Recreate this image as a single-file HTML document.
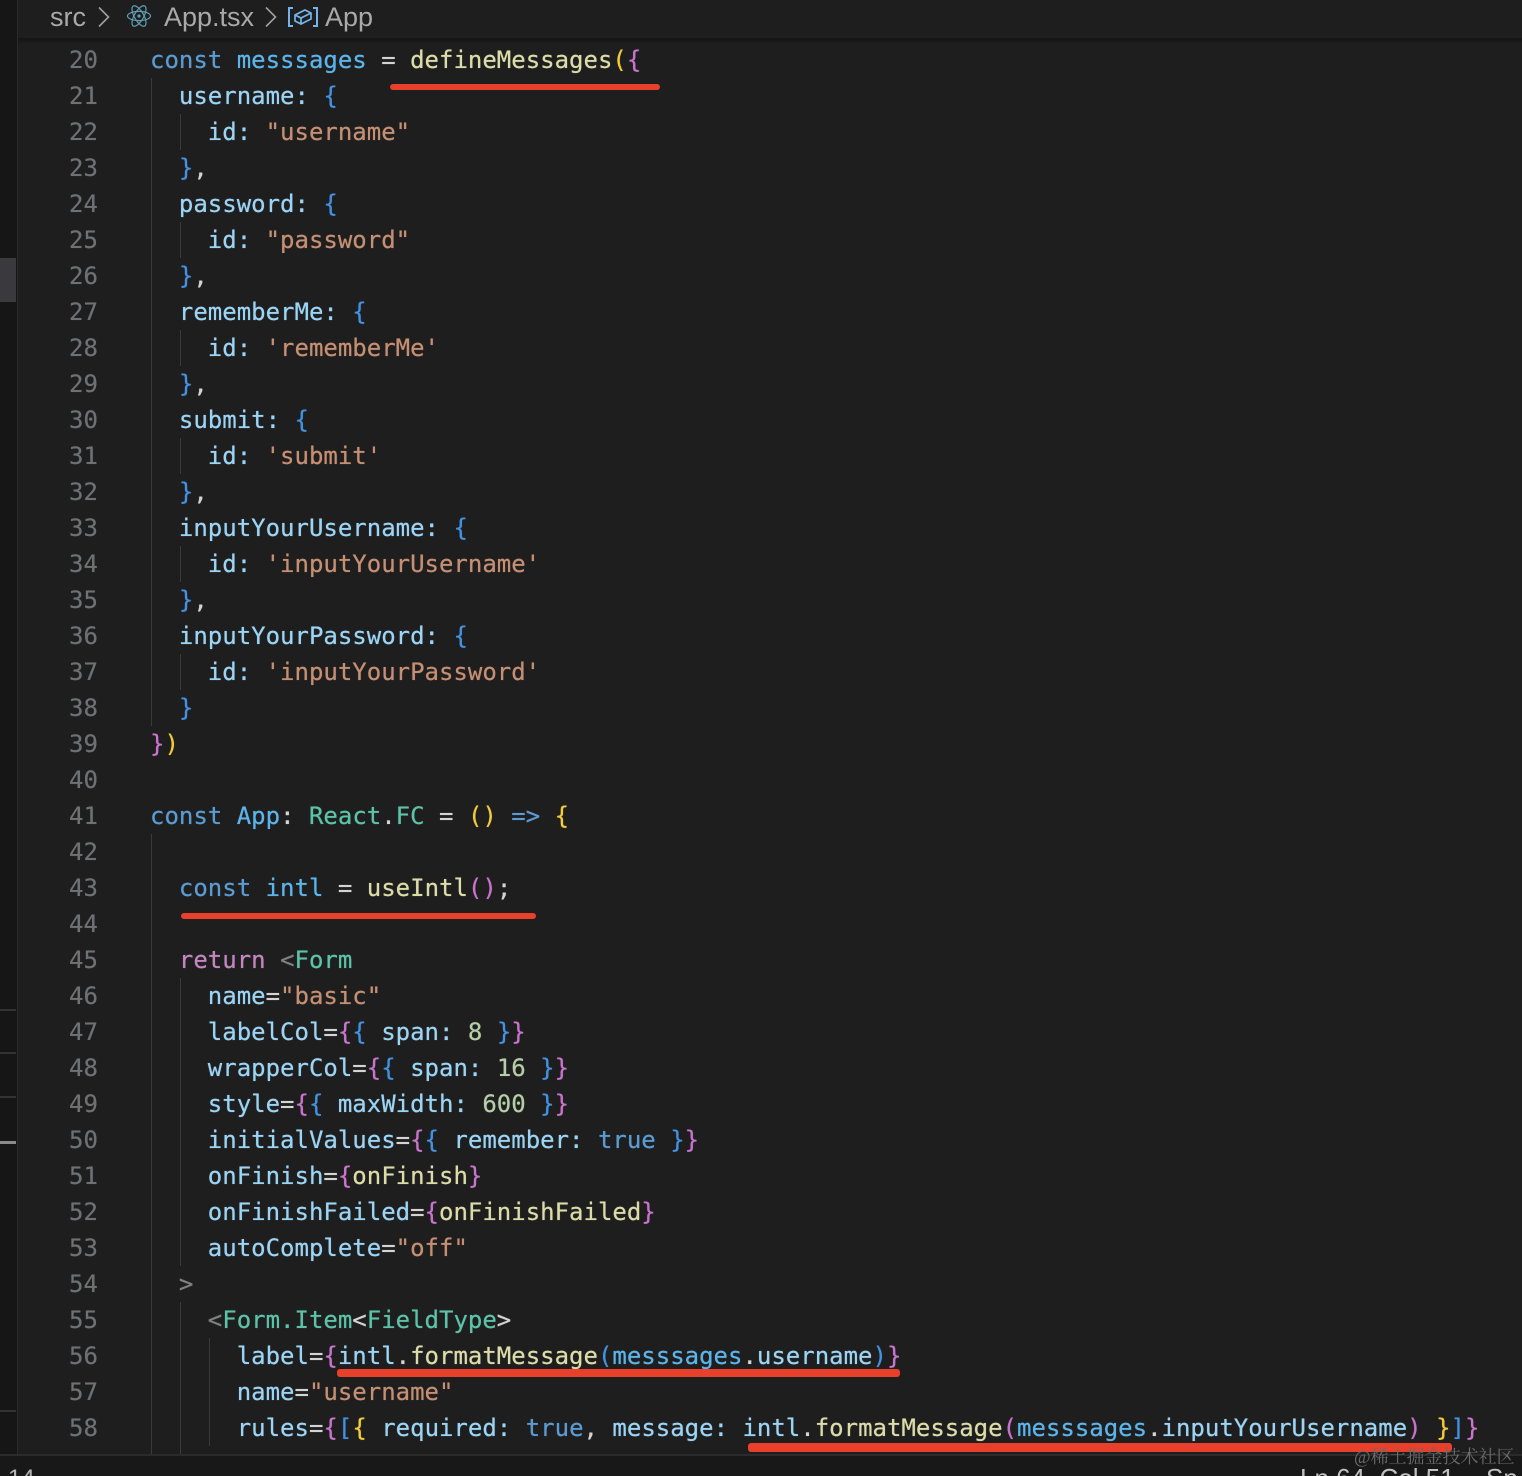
<!DOCTYPE html>
<html lang="en"><head><meta charset="utf-8"><title>App.tsx</title>
<style>
*{margin:0;padding:0;box-sizing:border-box}
html,body{width:1522px;height:1476px;overflow:hidden;background:#1e1e1e}
#p{position:relative;width:1522px;height:1476px;overflow:hidden;background:#1e1e1e;font-family:"DejaVu Sans Mono","Liberation Mono",monospace;font-size:24px;color:#9cd4f5;filter:blur(.3px)}
.a{position:absolute}
.l{position:absolute;left:150px;height:36px;line-height:36px;white-space:pre;text-shadow:0 0 .6px currentColor;top:0}
.n{position:absolute;left:69px;height:36px;line-height:36px;color:#6e7174;text-shadow:0 0 .5px currentColor}
.g{position:absolute;width:1px;background:#3a3a3a}
.r{position:absolute;background:#e8402a;border-radius:3px}
.u{font-family:"Liberation Sans",sans-serif;color:#a9a9a9;font-size:27px;line-height:34px;white-space:pre}
.k{color:#5a9bd2}.c{color:#5cb4ea}.f{color:#dcdcaa}.s{color:#c58f74}.t{color:#5cc3a8}.w{color:#d4d4d4}.y{color:#f2cb3c}.m{color:#c874cc}.b{color:#4391e0}.q{color:#c586c0}.d{color:#808080}.h{color:#b5cea8}
</style></head><body><div id="p">
<div class="a" style="left:0;top:0;width:17px;height:1476px;background:#161616"></div>
<div class="a" style="left:17px;top:0;width:1px;height:1455px;background:#2b2b2b"></div>
<div class="a" style="left:0;top:258px;width:16px;height:44px;background:#3a3a3e"></div>
<div class="a" style="left:0;top:1009px;width:16px;height:2px;background:#333"></div>
<div class="a" style="left:0;top:1052px;width:16px;height:2px;background:#333"></div>
<div class="a" style="left:0;top:1096px;width:16px;height:2px;background:#333"></div>
<div class="a" style="left:0;top:1141px;width:16px;height:3px;background:#8a8a8a"></div>
<div class="a" style="left:0;top:1410px;width:16px;height:2px;background:#333"></div>

<div class="a" style="left:18px;top:0;width:1504px;height:38px;background:#1e1e1e"></div>
<div class="a" style="left:18px;top:38px;width:1504px;height:6px;background:linear-gradient(#141414,#1e1e1e)"></div>
<div class="a u" style="left:50px;top:0">src</div>
<svg class="a" style="left:96px;top:6px" width="16" height="22" viewBox="0 0 16 22" fill="none" stroke="#a0a0a0" stroke-width="1.6"><path d="M3 1.5 12.5 11 3 20.5"/></svg>
<svg class="a" style="left:126px;top:2px" width="26" height="28" viewBox="-13 -14 26 28" fill="none" stroke="#5f9fb5" stroke-width="1.2"><ellipse rx="11.5" ry="4.6"/><ellipse rx="11.5" ry="4.6" transform="rotate(60)"/><ellipse rx="11.5" ry="4.6" transform="rotate(120)"/><circle r="1.6" fill="#5f9fb5" stroke="none"/></svg>
<div class="a u" style="left:164px;top:0">App.tsx</div>
<svg class="a" style="left:263px;top:6px" width="16" height="22" viewBox="0 0 16 22" fill="none" stroke="#a0a0a0" stroke-width="1.6"><path d="M3 1.5 12.5 11 3 20.5"/></svg>
<svg class="a" style="left:287px;top:6px" width="32" height="22" viewBox="0 0 32 22" fill="none" stroke="#74b4ea" stroke-width="2"><path d="M6 2H2V20H6M26 2H30V20H26"/><path d="M8 9 18 4 24 7V13L14 18 8 15ZM8 9 14 12 24 7M14 12V18" stroke-width="1.7"/></svg>
<div class="a u" style="left:325px;top:0">App</div>

<div class="g" style="left:151px;top:78px;height:648px"></div>
<div class="g" style="left:151px;top:834px;height:620px"></div>
<div class="g" style="left:180px;top:114px;height:36px"></div>
<div class="g" style="left:180px;top:222px;height:36px"></div>
<div class="g" style="left:180px;top:330px;height:36px"></div>
<div class="g" style="left:180px;top:438px;height:36px"></div>
<div class="g" style="left:180px;top:546px;height:36px"></div>
<div class="g" style="left:180px;top:654px;height:36px"></div>
<div class="g" style="left:180px;top:978px;height:288px"></div>
<div class="g" style="left:180px;top:1302px;height:152px"></div>
<div class="g" style="left:209px;top:1338px;height:108px"></div>

<div class="n" style="top:42px">20</div><div class="n" style="top:78px">21</div><div class="n" style="top:114px">22</div><div class="n" style="top:150px">23</div><div class="n" style="top:186px">24</div><div class="n" style="top:222px">25</div><div class="n" style="top:258px">26</div><div class="n" style="top:294px">27</div><div class="n" style="top:330px">28</div><div class="n" style="top:366px">29</div><div class="n" style="top:402px">30</div><div class="n" style="top:438px">31</div><div class="n" style="top:474px">32</div><div class="n" style="top:510px">33</div><div class="n" style="top:546px">34</div><div class="n" style="top:582px">35</div><div class="n" style="top:618px">36</div><div class="n" style="top:654px">37</div><div class="n" style="top:690px">38</div><div class="n" style="top:726px">39</div><div class="n" style="top:762px">40</div><div class="n" style="top:798px">41</div><div class="n" style="top:834px">42</div><div class="n" style="top:870px">43</div><div class="n" style="top:906px">44</div><div class="n" style="top:942px">45</div><div class="n" style="top:978px">46</div><div class="n" style="top:1014px">47</div><div class="n" style="top:1050px">48</div><div class="n" style="top:1086px">49</div><div class="n" style="top:1122px">50</div><div class="n" style="top:1158px">51</div><div class="n" style="top:1194px">52</div><div class="n" style="top:1230px">53</div><div class="n" style="top:1266px">54</div><div class="n" style="top:1302px">55</div><div class="n" style="top:1338px">56</div><div class="n" style="top:1374px">57</div><div class="n" style="top:1410px">58</div>

<div class="l" style="top:42px"><span class="k">const</span> <span class="c">messsages</span> <span class="w">=</span> <span class="f">defineMessages</span><span class="y">(</span><span class="m">{</span></div>
<div class="l" style="top:78px">  username: <span class="b">{</span></div>
<div class="l" style="top:114px">    id: <span class="s">"username"</span></div>
<div class="l" style="top:150px">  <span class="b">}</span><span class="w">,</span></div>
<div class="l" style="top:186px">  password: <span class="b">{</span></div>
<div class="l" style="top:222px">    id: <span class="s">"password"</span></div>
<div class="l" style="top:258px">  <span class="b">}</span><span class="w">,</span></div>
<div class="l" style="top:294px">  rememberMe: <span class="b">{</span></div>
<div class="l" style="top:330px">    id: <span class="s">'rememberMe'</span></div>
<div class="l" style="top:366px">  <span class="b">}</span><span class="w">,</span></div>
<div class="l" style="top:402px">  submit: <span class="b">{</span></div>
<div class="l" style="top:438px">    id: <span class="s">'submit'</span></div>
<div class="l" style="top:474px">  <span class="b">}</span><span class="w">,</span></div>
<div class="l" style="top:510px">  inputYourUsername: <span class="b">{</span></div>
<div class="l" style="top:546px">    id: <span class="s">'inputYourUsername'</span></div>
<div class="l" style="top:582px">  <span class="b">}</span><span class="w">,</span></div>
<div class="l" style="top:618px">  inputYourPassword: <span class="b">{</span></div>
<div class="l" style="top:654px">    id: <span class="s">'inputYourPassword'</span></div>
<div class="l" style="top:690px">  <span class="b">}</span></div>
<div class="l" style="top:726px"><span class="m">}</span><span class="y">)</span></div>
<div class="l" style="top:798px"><span class="k">const</span> <span class="c">App</span><span class="w">:</span> <span class="t">React</span><span class="w">.</span><span class="t">FC</span> <span class="w">=</span> <span class="y">()</span> <span class="k">=&gt;</span> <span class="y">{</span></div>
<div class="l" style="top:870px">  <span class="k">const</span> <span class="c">intl</span> <span class="w">=</span> <span class="f">useIntl</span><span class="m">()</span><span class="w">;</span></div>
<div class="l" style="top:942px">  <span class="q">return</span> <span class="d">&lt;</span><span class="t">Form</span></div>
<div class="l" style="top:978px">    name<span class="w">=</span><span class="s">"basic"</span></div>
<div class="l" style="top:1014px">    labelCol<span class="w">=</span><span class="m">{</span><span class="b">{</span> span: <span class="h">8</span> <span class="b">}</span><span class="m">}</span></div>
<div class="l" style="top:1050px">    wrapperCol<span class="w">=</span><span class="m">{</span><span class="b">{</span> span: <span class="h">16</span> <span class="b">}</span><span class="m">}</span></div>
<div class="l" style="top:1086px">    style<span class="w">=</span><span class="m">{</span><span class="b">{</span> maxWidth: <span class="h">600</span> <span class="b">}</span><span class="m">}</span></div>
<div class="l" style="top:1122px">    initialValues<span class="w">=</span><span class="m">{</span><span class="b">{</span> remember: <span class="k">true</span> <span class="b">}</span><span class="m">}</span></div>
<div class="l" style="top:1158px">    onFinish<span class="w">=</span><span class="m">{</span><span class="f">onFinish</span><span class="m">}</span></div>
<div class="l" style="top:1194px">    onFinishFailed<span class="w">=</span><span class="m">{</span><span class="f">onFinishFailed</span><span class="m">}</span></div>
<div class="l" style="top:1230px">    autoComplete<span class="w">=</span><span class="s">"off"</span></div>
<div class="l" style="top:1266px">  <span class="d">&gt;</span></div>
<div class="l" style="top:1302px">    <span class="d">&lt;</span><span class="t">Form.Item</span><span class="w">&lt;</span><span class="t">FieldType</span><span class="w">&gt;</span></div>
<div class="l" style="top:1338px">      label<span class="w">=</span><span class="m">{</span>intl<span class="w">.</span><span class="f">formatMessage</span><span class="b">(</span><span class="c">messsages</span><span class="w">.</span>username<span class="b">)</span><span class="m">}</span></div>
<div class="l" style="top:1374px">      name<span class="w">=</span><span class="s">"username"</span></div>
<div class="l" style="top:1410px">      rules<span class="w">=</span><span class="m">{</span><span class="b">[</span><span class="y">{</span> required: <span class="k">true</span><span class="w">,</span> message: intl<span class="w">.</span><span class="f">formatMessage</span><span class="m">(</span><span class="c">messsages</span><span class="w">.</span>inputYourUsername<span class="m">)</span> <span class="y">}</span><span class="b">]</span><span class="m">}</span></div>

<div class="r" style="left:390px;top:84px;width:270px;height:6px"></div>
<div class="r" style="left:181px;top:913px;width:355px;height:6px"></div>
<div class="r" style="left:337px;top:1369px;width:563px;height:8px"></div>

<div class="a" style="left:0;top:1454px;width:1522px;height:22px;background:#181818;border-top:2px solid #2b2b2b"></div>
<div class="r" style="left:748px;top:1443px;width:704px;height:9px"></div>
<div class="a" style="left:8px;top:1465px;font-family:'Liberation Sans',sans-serif;font-size:24px;line-height:28px;color:#b5b5b5">14</div>
<div class="a" style="left:1300px;top:1464px;font-family:'Liberation Sans',sans-serif;font-size:26px;line-height:28px;color:#c0c0c0;white-space:pre">Ln 64, Col 51</div>
<div class="a" style="left:1486px;top:1464px;font-family:'Liberation Sans',sans-serif;font-size:26px;line-height:28px;color:#c0c0c0">Sp</div>
<div class="a" style="left:1354px;top:1446px;font-family:'Liberation Serif','Noto Serif CJK SC',serif;font-size:18px;line-height:22px;color:#6a6a6a;white-space:pre">@稀土掘金技术社区</div>
</div></body></html>
